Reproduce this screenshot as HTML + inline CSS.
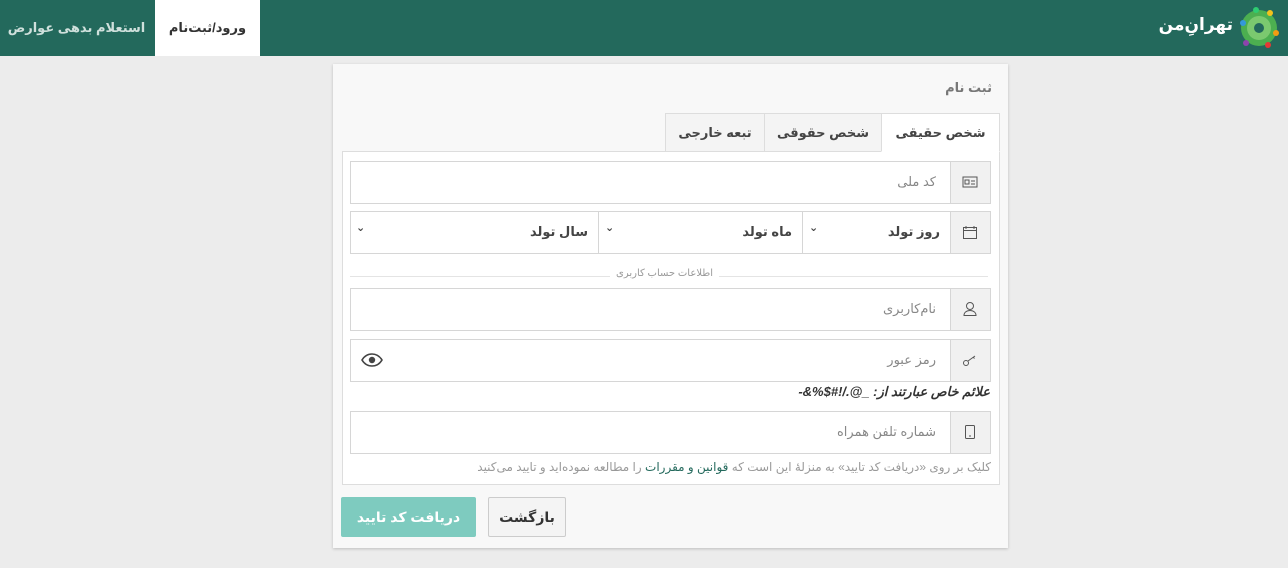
<!DOCTYPE html>
<html dir="rtl"><head><meta charset="utf-8"><style>
*{box-sizing:border-box;margin:0;padding:0}
body{width:1288px;height:568px;background:#ececec;font-family:"Liberation Sans","DejaVu Sans",sans-serif;position:relative;overflow:hidden;font-size:13px;color:#555}
.abs{position:absolute;white-space:nowrap}
.hdr{left:0;top:0;width:1288px;height:56px;background:#23695c}
.card{left:333px;top:64px;width:675px;height:484px;background:#f8f8f8;box-shadow:0 1px 3px rgba(0,0,0,.2)}
.tab{top:113px;height:39px;border:1px solid #ddd;background:#f4f4f4;font-size:13px;font-weight:bold;color:#444;text-align:center;line-height:37px}
.box{left:342px;top:151px;width:658px;height:334px;border:1px solid #ddd;background:#fff}
.grp{left:350px;width:641px;height:43px;border:1px solid #d6d6d6;background:#fff}
.ad{position:absolute;right:0;top:0;width:40px;height:41px;background:#f1f1f1;border-left:1px solid #d6d6d6}
.ph{position:absolute;right:54px;top:12px;color:#888;font-size:13px}
.sel{position:absolute;top:0;height:41px;border-left:1px solid #d6d6d6;color:#444;font-weight:bold;font-size:13px}
.sel span{position:absolute;right:10px;top:12px}
.sel i{position:absolute;left:6px;top:9px;font-style:normal;font-size:11px;color:#444}
</style></head><body>
<div class="abs hdr"></div>
<div class="abs" style="left:155px;top:0;width:105px;height:56px;background:#fff;text-align:center;line-height:56px;font-weight:bold;color:#333;font-size:13px">ورود/ثبت‌نام</div>
<div class="abs" style="left:4px;top:0;width:145px;height:56px;line-height:56px;color:#cfe0dc;font-weight:bold;font-size:13px;text-align:center">استعلام بدهی عوارض</div>
<div class="abs" style="right:55px;top:15px;color:#fff;font-weight:bold;font-size:17px">تهرانِ‌من</div>
<svg class="abs" style="left:1238px;top:7px" width="42" height="42" viewBox="0 0 42 42"><circle cx="21" cy="21" r="18" fill="#4caf50"/><circle cx="21" cy="21" r="12" fill="#7bc96f"/><circle cx="21" cy="21" r="5" fill="#23695c"/><circle cx="32" cy="6" r="3" fill="#f3c21b"/><circle cx="38" cy="26" r="3" fill="#f39c12"/><circle cx="30" cy="38" r="3" fill="#e53935"/><circle cx="8" cy="36" r="3" fill="#8e44ad"/><circle cx="5" cy="16" r="3" fill="#3498db"/><circle cx="18" cy="3" r="3" fill="#2ecc71"/></svg>
<div class="abs card"></div>
<div class="abs" style="right:296px;top:80px;font-size:13px;color:#777;font-weight:bold">ثبت نام</div>
<div class="abs tab" style="left:881px;width:119px;background:#fff;border-bottom-color:#fff;z-index:2">شخص حقیقی</div>
<div class="abs tab" style="left:764px;width:118px">شخص حقوقی</div>
<div class="abs tab" style="left:665px;width:100px">تبعه خارجی</div>
<div class="abs box"></div>
<div class="abs grp" style="top:161px"><div class="ad"><svg style="margin:13px 12px" width="16" height="14" viewBox="0 0 16 14"><rect x="1" y="2" width="14" height="10" fill="none" stroke="#555"/><rect x="3" y="5" width="4" height="4" fill="none" stroke="#555"/><path d="M9 6h4M9 9h4" stroke="#555"/></svg></div><span class="ph">کد ملی</span></div>
<div class="abs grp" style="top:211px"><div class="ad"><svg style="margin:13px 12px" width="16" height="15" viewBox="0 0 16 15"><rect x="1.5" y="2.5" width="13" height="11" fill="none" stroke="#555"/><path d="M1.5 5.5h13M4 1v3M12 1v3" stroke="#555"/></svg></div>
<div class="sel" style="right:40px;width:148px"><span>روز تولد</span><i>⌄</i></div>
<div class="sel" style="right:188px;width:204px"><span>ماه تولد</span><i>⌄</i></div>
<div class="sel" style="right:392px;width:248px;border-left:none"><span>سال تولد</span><i>⌄</i></div></div>
<div class="abs" style="left:350px;top:276px;width:638px;border-top:1px solid #e4e4e4"></div>
<div class="abs" style="left:610px;top:268px;padding:0 6px;background:#fff;font-size:10px;color:#999">اطلاعات حساب کاربری</div>
<div class="abs grp" style="top:288px"><div class="ad"><svg style="margin:12px 12px" width="16" height="16" viewBox="0 0 16 16"><circle cx="8" cy="5" r="3.5" fill="none" stroke="#555"/><path d="M2 14.5h12c0-3-2.5-5-6-5s-6 2-6 5z" fill="none" stroke="#555"/></svg></div><span class="ph">نام‌کاربری</span></div>
<div class="abs grp" style="top:339px"><div class="ad"><svg style="margin:13px 12px" width="16" height="14" viewBox="0 0 16 14"><circle cx="4" cy="10" r="2.5" fill="none" stroke="#555"/><path d="M6 8l7-5M11 4l1.5 1.5" stroke="#555"/></svg></div><span class="ph">رمز عبور</span>
<svg style="position:absolute;left:10px;top:13px" width="22" height="14" viewBox="0 0 22 14"><path d="M1 7C4 2 8 1 11 1s7 1 10 6c-3 5-7 6-10 6S4 12 1 7z" fill="none" stroke="#444" stroke-width="1.6"/><circle cx="11" cy="7" r="3.2" fill="#444"/></svg></div>
<div class="abs" style="right:298px;top:384px;font-size:13px;font-weight:bold;font-style:italic;color:#333">علائم خاص عبارتند از: _@./!#$%&amp;-</div>
<div class="abs grp" style="top:411px"><div class="ad"><svg style="margin:12px 14px" width="12" height="16" viewBox="0 0 12 16"><rect x="1.5" y="1.5" width="9" height="13" rx="1" fill="none" stroke="#555"/><path d="M5 12h2" stroke="#555"/></svg></div><span class="ph">شماره تلفن همراه</span></div>
<div class="abs" style="right:297px;top:460px;font-size:12px;color:#999">کلیک بر روی «دریافت کد تایید» به منزلهٔ این است که <span style="color:#23695c">قوانین و مقررات</span> را مطالعه نموده‌اید و تایید می‌کنید</div>
<div class="abs" style="left:341px;top:497px;width:135px;height:40px;background:#7ecbbf;color:#fff;font-weight:bold;font-size:14px;text-align:center;line-height:40px;border-radius:2px">دریافت کد تایید</div>
<div class="abs" style="left:488px;top:497px;width:78px;height:40px;background:#f4f4f4;border:1px solid #ccc;color:#333;font-weight:bold;font-size:14px;text-align:center;line-height:38px;border-radius:2px">بازگشت</div>
</body></html>
